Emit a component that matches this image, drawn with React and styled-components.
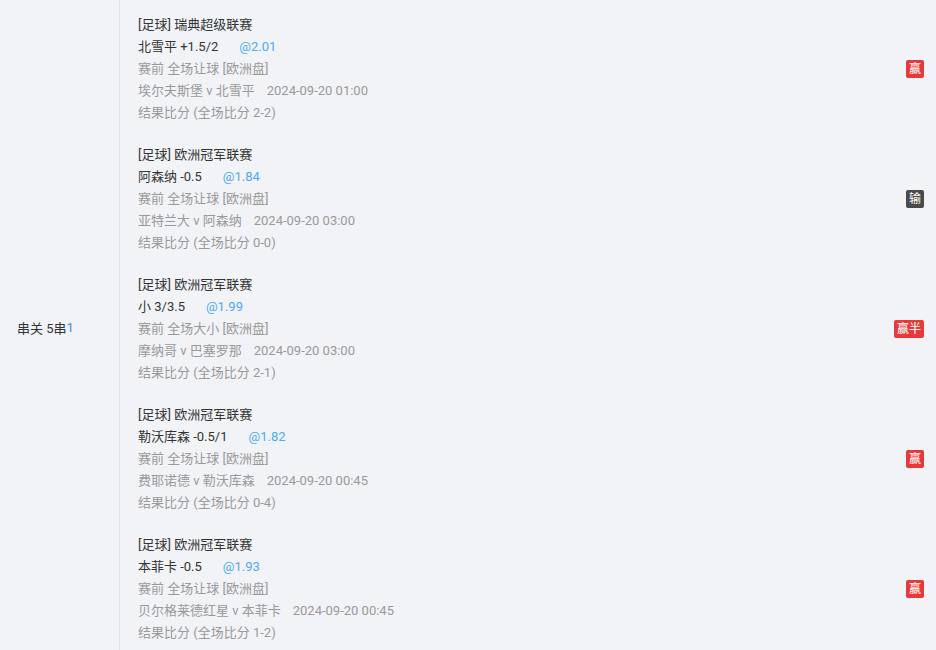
import React from "react";
import styled, { createGlobalStyle } from "styled-components";

const Global = createGlobalStyle`
  html, body { margin: 0; padding: 0; background: #f2f3f7; }
  body { font-family: Roboto, "Noto Sans CJK SC", sans-serif; }
`;

const Table = styled.div`
  display: flex;
  width: 936px;
  min-height: 650px;
  background: #f2f3f7;
  font-size: 13px;
  color: #333;
`;

const LeftCell = styled.div`
  width: 120px;
  flex: none;
  display: flex;
  align-items: center;
  padding-left: 17px;
  box-sizing: border-box;
  border-right: 1px solid #dde2ee;
  color: #333;
  padding-top: 4px;
`;

const Blue = styled.span`
  color: #3a8ee6;
`;

const RightCell = styled.div`
  flex: 1;
  display: flex;
  flex-direction: column;
`;

const Block = styled.div`
  display: flex;
  align-items: center;
  padding: 14px 12px 6px 18px;
  height: 130px;
  box-sizing: border-box;
`;

const Lines = styled.div`
  flex: 1;
  display: flex;
  flex-direction: column;
`;

const Line = styled.div`
  height: 22px;
  line-height: 22px;
  white-space: nowrap;
  color: ${(p) => (p.$muted ? "#999" : "#333")};
`;

const Odds = styled.span`
  color: #4fa8f5;
  margin-left: 21px;
`;

const Time = styled.span`
  margin-left: 12px;
`;

const Badge = styled.span`
  flex: none;
  height: 18px;
  line-height: 18px;
  padding: 0 3px;
  text-align: center;
  border-radius: 2px;
  font-size: 12px;
  color: #fff;
  background: ${(p) => (p.$lose ? "#4a4a4a" : "#e53a3a")};
`;

const bets = [
  { league: "瑞典超级联赛", pick: "北雪平 +1.5/2", odds: "@2.01", type: "全场让球", teams: "埃尔夫斯堡 v 北雪平", time: "2024-09-20 01:00", score: "2-2", result: "赢" },
  { league: "欧洲冠军联赛", pick: "阿森纳 -0.5", odds: "@1.84", type: "全场让球", teams: "亚特兰大 v 阿森纳", time: "2024-09-20 03:00", score: "0-0", result: "输", lose: true },
  { league: "欧洲冠军联赛", pick: "小 3/3.5", odds: "@1.99", type: "全场大小", teams: "摩纳哥 v 巴塞罗那", time: "2024-09-20 03:00", score: "2-1", result: "赢半" },
  { league: "欧洲冠军联赛", pick: "勒沃库森 -0.5/1", odds: "@1.82", type: "全场让球", teams: "费耶诺德 v 勒沃库森", time: "2024-09-20 00:45", score: "0-4", result: "赢" },
  { league: "欧洲冠军联赛", pick: "本菲卡 -0.5", odds: "@1.93", type: "全场让球", teams: "贝尔格莱德红星 v 本菲卡", time: "2024-09-20 00:45", score: "1-2", result: "赢" },
];

export default function App() {
  return (
    <>
      <Global />
      <Table>
        <LeftCell>
          串关 5串<Blue>1</Blue>
        </LeftCell>
        <RightCell>
          {bets.map((b, i) => (
            <Block key={i}>
              <Lines>
                <Line>[足球] {b.league}</Line>
                <Line>
                  {b.pick}
                  <Odds>{b.odds}</Odds>
                </Line>
                <Line $muted>赛前 {b.type} [欧洲盘]</Line>
                <Line $muted>
                  {b.teams}
                  <Time>{b.time}</Time>
                </Line>
                <Line $muted>结果比分 (全场比分 {b.score})</Line>
              </Lines>
              <Badge $lose={b.lose}>{b.result}</Badge>
            </Block>
          ))}
        </RightCell>
      </Table>
    </>
  );
}
